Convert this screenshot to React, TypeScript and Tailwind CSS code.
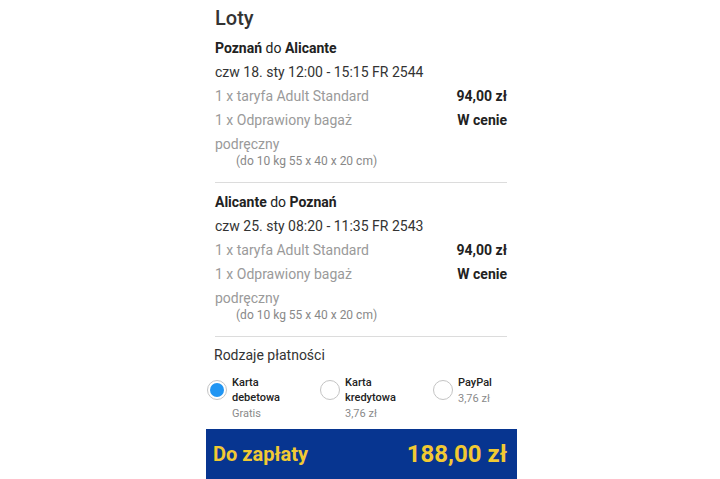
import React from "react";

const font = { fontFamily: "Roboto, 'Noto Sans', sans-serif" };

function Flight({ from, to, date }: { from: string; to: string; date: string }) {
  return (
    <div className="pl-[9px] pr-[10px]">
      <div className="h-[24px] leading-[24px] text-[14px] text-[#222]">
        <span className="font-bold">{from}</span> do <span className="font-bold">{to}</span>
      </div>
      <div className="h-[24px] leading-[24px] text-[14px] text-[#333]">{date}</div>
      <div className="flex justify-between h-[24px] leading-[24px] text-[14px]">
        <span className="text-[#9a9a9a]">1 x taryfa Adult Standard</span>
        <span className="font-bold text-[#222]">94,00 zł</span>
      </div>
      <div className="flex justify-between h-[24px] leading-[24px] text-[14px]">
        <span className="text-[#9a9a9a]">1 x Odprawiony bagaż</span>
        <span className="font-bold text-[#222]">W cenie</span>
      </div>
      <div className="h-[24px] leading-[24px] text-[14px] text-[#9a9a9a]">podręczny</div>
      <div className="mt-[-2px] pl-[21px] h-[14px] leading-[14px] text-[12px] text-[#888]">(do 10 kg 55 x 40 x 20 cm)</div>
      <div className="mt-[14px] h-px bg-[#dcdcdc]" />
    </div>
  );
}

function Radio({ checked }: { checked?: boolean }) {
  return (
    <div className="w-[20px] h-[20px] rounded-full border border-[#c4c4c4] flex items-center justify-center shrink-0 bg-white">
      {checked && <div className="w-[14px] h-[14px] rounded-full bg-[#2196f3]" />}
    </div>
  );
}

function Pay({ lines, sub, checked }: { lines: string[]; sub: string; checked?: boolean }) {
  return (
    <div className="w-[113px] shrink-0 flex items-start gap-[5px]">
      <div className="mt-[5px]">
        <Radio checked={checked} />
      </div>
      <div className="flex flex-col text-[11px] leading-[15px]">
        {lines.map((l) => (
          <span key={l} className="font-medium text-[#222]">{l}</span>
        ))}
        <span className="text-[#8a8a8a] mt-[1px]">{sub}</span>
      </div>
    </div>
  );
}

export default function App() {
  return (
    <div className="w-[720px] h-[479px] overflow-hidden bg-white" style={font}>
      <div className="ml-[206px] w-[311px]">
        <div className="pt-[4px] px-[9px] h-[32px] leading-[28px] text-[20px] font-medium text-[#333]">Loty</div>
        <div className="mt-[4px]">
          <Flight from="Poznań" to="Alicante" date="czw 18. sty 12:00 - 15:15 FR 2544" />
        </div>
        <div className="mt-[7px]">
          <Flight from="Alicante" to="Poznań" date="czw 25. sty 08:20 - 11:35 FR 2543" />
        </div>
        <div className="mt-[7px] pl-[8px] h-[22px] leading-[22px] text-[14px] text-[#333]">Rodzaje płatności</div>
        <div className="mt-[9px] flex pl-[1px]">
          <Pay lines={["Karta", "debetowa"]} sub="Gratis" checked />
          <Pay lines={["Karta", "kredytowa"]} sub="3,76 zł" />
          <Pay lines={["PayPal"]} sub="3,76 zł" />
        </div>
        <div className="mt-[8px] h-[50px] bg-[#073590] flex items-center justify-between pl-[7px] pr-[10px]">
          <span className="text-[20px] font-bold text-[#f1c933]">Do zapłaty</span>
          <span className="text-[24px] font-bold text-[#f1c933]">188,00 zł</span>
        </div>
      </div>
    </div>
  );
}
